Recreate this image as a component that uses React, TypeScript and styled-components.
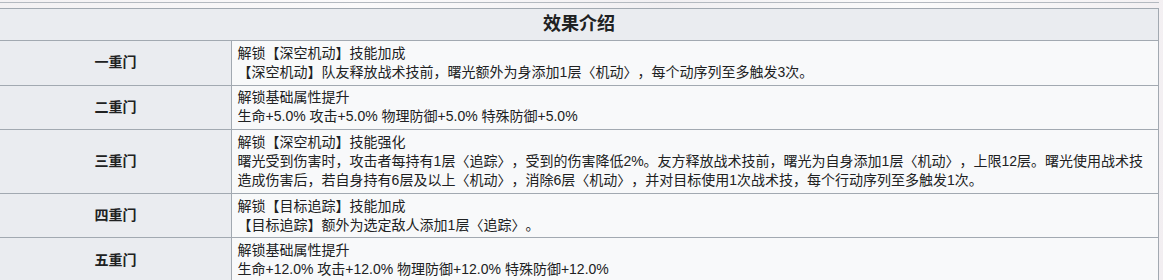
import React from "react";
import styled, { createGlobalStyle } from "styled-components";

interface EffectRow {
  level: string;
  lines: string[];
}

const rows: EffectRow[] = [
  {
    level: "一重门",
    lines: [
      "解锁【深空机动】技能加成",
      "【深空机动】队友释放战术技前，曙光额外为身添加1层〈机动〉，每个动序列至多触发3次。",
    ],
  },
  {
    level: "二重门",
    lines: ["解锁基础属性提升", "生命+5.0% 攻击+5.0% 物理防御+5.0% 特殊防御+5.0%"],
  },
  {
    level: "三重门",
    lines: [
      "解锁【深空机动】技能强化",
      "曙光受到伤害时，攻击者每持有1层〈追踪〉，受到的伤害降低2%。友方释放战术技前，曙光为自身添加1层〈机动〉，上限12层。曙光使用战术技",
      "造成伤害后，若自身持有6层及以上〈机动〉，消除6层〈机动〉，并对目标使用1次战术技，每个行动序列至多触发1次。",
    ],
  },
  {
    level: "四重门",
    lines: ["解锁【目标追踪】技能加成", "【目标追踪】额外为选定敌人添加1层〈追踪〉。"],
  },
  {
    level: "五重门",
    lines: [
      "解锁基础属性提升",
      "生命+12.0% 攻击+12.0% 物理防御+12.0% 特殊防御+12.0%",
    ],
  },
];

const GlobalStyle = createGlobalStyle`
  html, body {
    margin: 0;
    padding: 0;
  }
  body {
    background: linear-gradient(100deg, #f3f1f3 0%, #fbfafb 30%, #f1eff2 55%, #fbfbfb 75%, #f2eef1 100%);
    font-family: "Liberation Sans", "Noto Sans CJK SC", sans-serif;
    color: #202122;
    overflow: hidden;
    text-spacing-trim: space-all;
  }
`;

const Page = styled.div`
  width: 1163px;
  height: 280px;
  overflow: hidden;
`;

const PrevEdge = styled.div`
  height: 2px;
  width: 1159px;
  border-bottom: 1px solid #b4b9c0;
`;

const Table = styled.div`
  margin: 5px 0 0 -1px;
  width: 1160px;
  display: grid;
  grid-template-columns: 232px 1fr;
  border-top: 1px solid #a2a9b1;
  border-left: 1px solid #a2a9b1;
  box-sizing: border-box;
`;

const Cell = styled.div<{ $head?: boolean }>`
  border-right: 1px solid #a2a9b1;
  border-bottom: 1px solid #a2a9b1;
  background: ${(p) => (p.$head ? "#eaecf0" : "#f8f9fa")};
  font-size: 14px;
`;

const Caption = styled(Cell)`
  grid-column: 1 / span 2;
  text-align: center;
  font-size: 18px;
  font-weight: bold;
  line-height: 25px;
  padding: 3px 0;
`;

const LevelCell = styled(Cell)`
  display: flex;
  align-items: center;
  justify-content: center;
  font-weight: bold;
  line-height: 19px;
`;

const TextCell = styled(Cell)`
  padding: 2.8px 5.6px;
  line-height: 19px;
`;

const Line = styled.div`
  white-space: nowrap;
  text-spacing-trim: space-all;
`;

export default function App() {
  return (
    <Page>
      <GlobalStyle />
      <PrevEdge />
      <Table>
        <Caption $head>效果介绍</Caption>
        {rows.map((row) => (
          <React.Fragment key={row.level}>
            <LevelCell $head>{row.level}</LevelCell>
            <TextCell>
              {row.lines.map((line, i) => (
                <Line key={i}>{line}</Line>
              ))}
            </TextCell>
          </React.Fragment>
        ))}
      </Table>
    </Page>
  );
}
